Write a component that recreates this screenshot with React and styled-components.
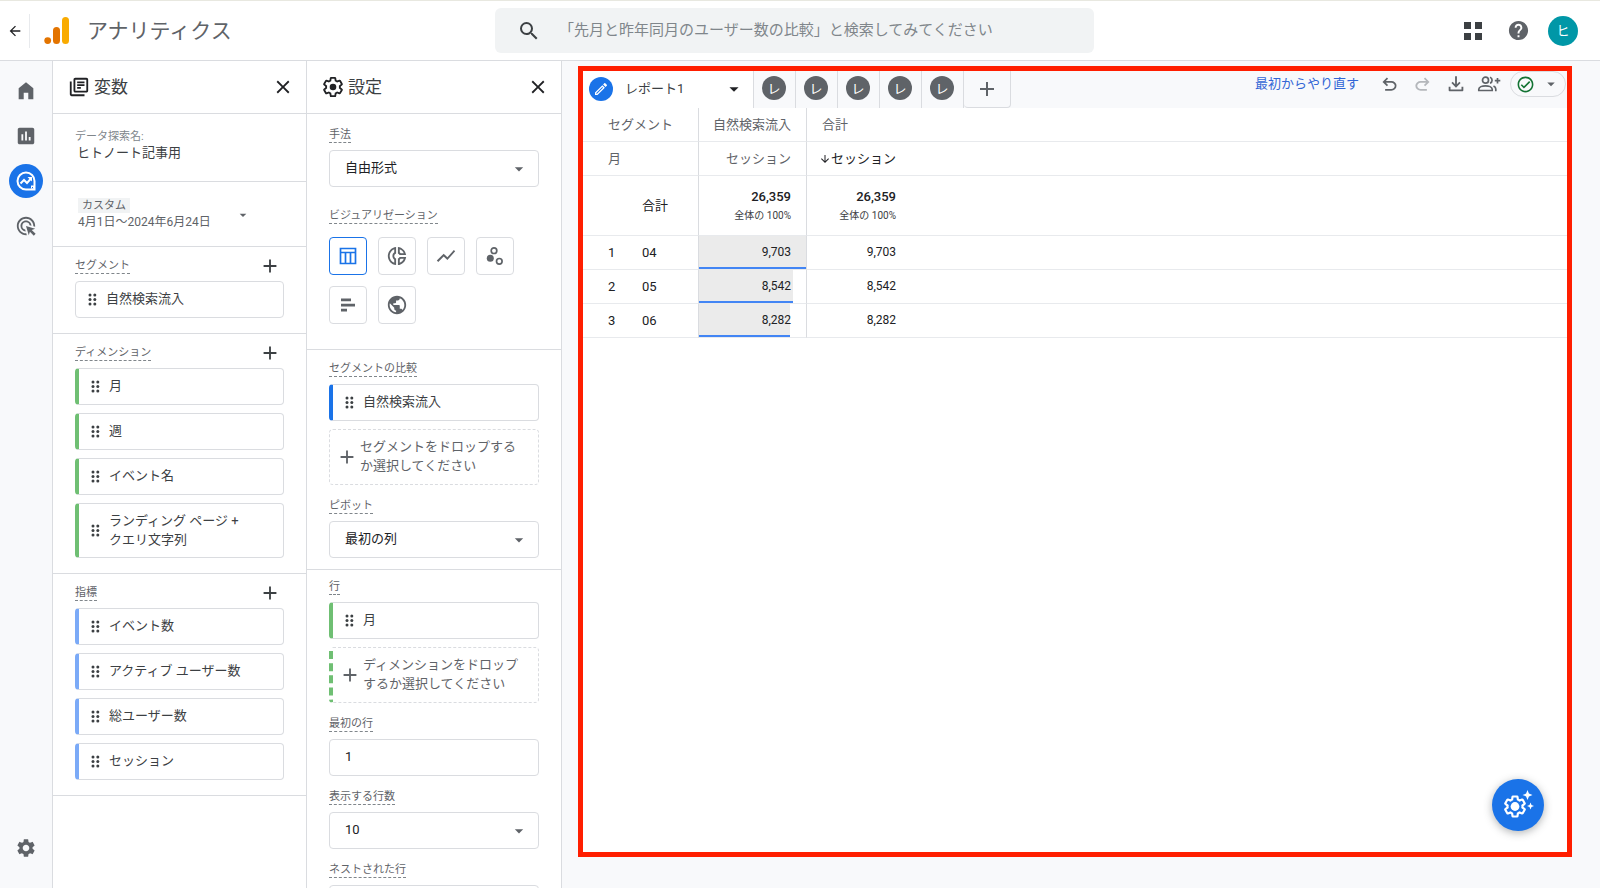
import React from "react";
import styled, { createGlobalStyle, css } from "styled-components";
import {
  MdAdd,
  MdAdsClick,
  MdArrowBack,
  MdArrowDownward,
  MdArrowDropDown,
  MdClose,
  MdHelp,
  MdInsertChart,
  MdOutlineCheckCircle,
  MdOutlineDonutSmall,
  MdOutlineEdit,
  MdOutlineLibraryBooks,
  MdPublic,
  MdSearch,
  MdSettings,
  MdShowChart,
} from "react-icons/md";

const color = {
  line: "#dadce0",
  softLine: "#e8eaed",
  surface: "#f8f9fb",
  ink: "#202124",
  text: "#3c4043",
  muted: "#5f6368",
  faint: "#80868b",
  blue: "#1a73e8",
  lightBlue: "#7baaf7",
  green: "#6fbf73",
  frame: "#ff1e00",
};

const GlobalStyle = createGlobalStyle`
  *, *::before, *::after { box-sizing: border-box; }
  body {
    margin: 0;
    background: #fff;
    color: ${color.text};
    font-family: Roboto, "Noto Sans CJK JP", sans-serif;
    font-size: 13px;
    line-height: 19px;
  }
  button, input, select {
    font: inherit;
    color: inherit;
    margin: 0;
  }
  svg { display: block; flex: none; }
`;

const PlainButton = styled.button.attrs({ type: "button" })`
  display: flex;
  align-items: center;
  justify-content: center;
  padding: 0;
  border: 0;
  background: none;
  cursor: pointer;
`;

/* ---------- drawings ---------- */

const GEAR =
  "M19.43 12.98c.04-.32.07-.64.07-.98 0-.34-.03-.66-.07-.98l2.11-1.65c.19-.15.24-.42.12-.64l-2-3.46a.5.5 0 0 0-.61-.22l-2.49 1c-.52-.4-1.08-.73-1.69-.98l-.38-2.65A.488.488 0 0 0 14 2h-4c-.25 0-.46.18-.49.42l-.38 2.65c-.61.25-1.17.59-1.69.98l-2.49-1a.566.566 0 0 0-.18-.03c-.17 0-.34.09-.43.25l-2 3.46c-.13.22-.07.49.12.64l2.11 1.65c-.04.32-.07.65-.07.98 0 .33.03.66.07.98l-2.11 1.65c-.19.15-.24.42-.12.64l2 3.46a.5.5 0 0 0 .61.22l2.49-1c.52.4 1.08.73 1.69.98l.38 2.65c.03.24.24.42.49.42h4c.25 0 .46-.18.49-.42l.38-2.65c.61-.25 1.17-.59 1.69-.98l2.49 1c.06.02.12.03.18.03.17 0 .34-.09.43-.25l2-3.46c.12-.22.07-.49-.12-.64l-2.11-1.65z";

const GearIcon = () => (
  <svg width="22" height="22" viewBox="0 0 24 24" fill="none" stroke="currentColor" strokeWidth="2">
    <path d={GEAR} />
    <circle cx="12" cy="12" r="3.6" fill="currentColor" stroke="none" />
  </svg>
);

const GearSparkIcon = () => (
  <svg width="31" height="30" viewBox="0 0 31 30" fill="currentColor">
    <g transform="translate(0 4.5)">
      <path d={GEAR} fill="none" stroke="currentColor" strokeWidth="2.2" />
      <circle cx="12" cy="12" r="4.4" />
    </g>
    <path d="M24.5 0l1.4 3.6 3.6 1.4-3.6 1.4-1.4 3.6-1.4-3.6-3.6-1.4 3.6-1.4z" />
    <path d="M27.5 12.5l1 2.5 2.5 1-2.5 1-1 2.5-1-2.5-2.5-1 2.5-1z" />
  </svg>
);

const Logo = () => (
  <svg width="25" height="28" viewBox="0 0 25 28" aria-hidden="true">
    <rect x="18" y="0" width="7" height="27" rx="3.5" fill="#f9ab00" />
    <rect x="9" y="10" width="7" height="17" rx="3.5" fill="#e37400" />
    <circle cx="3.7" cy="23.6" r="3.4" fill="#e37400" />
  </svg>
);

const HomeIcon = () => (
  <svg width="22" height="22" viewBox="0 0 24 24" fill="currentColor">
    <path d="M4 21V9l8-6.5L20 9v12h-5.500v-7h-5v7z" />
  </svg>
);

const ExploreIcon = () => (
  <svg width="20" height="20" viewBox="0 0 20 20" fill="none" stroke="currentColor" strokeWidth="2">
    <path d="M18.500 10A8.500 8.500 0 1 0 10 18.500h8.500z" />
    <path d="M4.500 12.500l3.500-3.500 3 3 4-4.500" />
    <path d="M11.500 6H16v4.500z" fill="currentColor" stroke="none" />
    <path d="M15 14.500h3v3h-3z" fill="currentColor" stroke="none" />
    <path d="M16 16h1v1h-1z" fill={color.blue} stroke="none" />
  </svg>
);

const GripIcon = () => (
  <svg width="9" height="13" viewBox="0 0 9 13" fill={color.text}>
    {[2, 6.5, 11].map((y) => (
      <React.Fragment key={y}>
        <circle cx="2" cy={y} r="1.5" />
        <circle cx="6.8" cy={y} r="1.5" />
      </React.Fragment>
    ))}
  </svg>
);

const AppsIcon = () => (
  <svg width="18" height="18" viewBox="0 0 18 18" fill={color.text}>
    <path d="M0 0h7v7H0zM11 0h7v7h-7zM0 11h7v7H0zM11 11h7v7h-7z" />
  </svg>
);

const TableIcon = () => (
  <svg width="18" height="18" viewBox="0 0 18 18" fill="none" stroke="currentColor" strokeWidth="1.7">
    <path d="M1.500 1.500h15v15h-15zM1.500 5.500h15M6.500 5.500v11M11.500 5.500v11" />
  </svg>
);

const ScatterIcon = () => (
  <svg width="18" height="18" viewBox="0 0 18 18" fill="none" stroke="currentColor" strokeWidth="1.7">
    <circle cx="8" cy="3.7" r="2.8" />
    <circle cx="13.3" cy="14.3" r="2.8" />
    <circle cx="4.3" cy="11.3" r="3.5" fill="currentColor" stroke="none" />
  </svg>
);

const BarsIcon = () => (
  <svg width="16" height="16" viewBox="0 0 16 16" fill="currentColor">
    <path d="M1 1.500h10v2.700H1zM1 6.700h14v2.700H1zM1 11.800h6v2.700H1z" />
  </svg>
);

const UndoIcon = () => (
  <svg width="21" height="21" viewBox="0 -960 960 960" fill="currentColor">
    <path d="M280-200v-80h284q63 0 109.500-40T720-420q0-60-46.500-100T564-560H312l104 104-56 56-200-200 200-200 56 56-104 104h252q97 0 169.500 63T800-420q0 94-72.500 157T564-200H280Z" />
  </svg>
);

const RedoIcon = () => (
  <svg width="21" height="21" viewBox="0 -960 960 960" fill="currentColor">
    <path d="M396-200q-97 0-169.500-63T154-420q0-94 72.500-157T396-640h252L544-744l56-56 200 200-200 200-56-56 104-104H396q-63 0-109.500 40T240-420q0 60 46.500 100T396-280h284v80H396Z" />
  </svg>
);

const DownloadIcon = () => (
  <svg width="22" height="22" viewBox="0 -960 960 960" fill="currentColor">
    <path d="M480-320 280-520l56-58 104 104v-346h80v346l104-104 56 58-200 200ZM220-160q-33 0-46.500-13.500T160-220v-140h80v120h480v-120h80v140q0 33-13.500 46.500T740-160H220Z" />
  </svg>
);

const ShareIcon = () => (
  <svg width="24" height="18" viewBox="0 0 24 18" fill="none" stroke="currentColor" strokeWidth="1.7">
    <circle cx="8.5" cy="5.2" r="3" />
    <path d="M1.800 15.500v-1.300c0-2 3.300-3.300 6.700-3.300s6.700 1.300 6.700 3.300v1.300zM13 2.200a3.200 3.200 0 0 1 0 6M16.500 10.900c1.500.7 2.300 1.700 2.300 3v2.400M20.500 3v5.500M17.800 5.700h5.500" />
  </svg>
);

/* ---------- shell ---------- */

const Shell = styled.div`
  display: flex;
  flex-direction: column;
  height: 100vh;
  overflow: hidden;
`;

const Header = styled.header`
  flex: none;
  display: grid;
  grid-template-columns: 495px minmax(0, 599px) 1fr;
  align-items: center;
  height: 61px;
  border-top: 1px solid #e8e8e0;
  border-bottom: 1px solid ${color.line};
`;

const Brand = styled.div`
  display: flex;
  align-items: center;
  height: 34px;
`;

const BackButton = styled(PlainButton)`
  width: 30px;
  height: 34px;
  border-right: 1px solid ${color.softLine};
  color: ${color.ink};
`;

const BrandName = styled.h1`
  margin: 0 0 0 18px;
  font-size: 21px;
  line-height: 30px;
  font-weight: 400;
  color: ${color.muted};
`;

const LogoLink = styled.a`
  margin-left: 14px;
`;

const SearchBox = styled.label`
  display: flex;
  align-items: center;
  gap: 18px;
  height: 45px;
  padding: 0 22px;
  border-radius: 6px;
  background: #f1f3f4;
  color: ${color.text};
`;

const SearchInput = styled.input`
  flex: 1;
  min-width: 0;
  padding: 0;
  border: 0;
  outline: 0;
  background: none;
  font-size: 15px;
  &::placeholder { color: ${color.faint}; opacity: 1; }
`;

const HeaderActions = styled.div`
  display: flex;
  align-items: center;
  justify-content: flex-end;
  gap: 15px;
  padding-right: 22px;
  color: ${color.muted};
`;

const HeaderButton = styled(PlainButton)`
  width: 30px;
  height: 30px;
`;

const Avatar = styled(HeaderButton)`
  border-radius: 50%;
  background: #0097a7;
  color: #fff;
`;

const Body = styled.div`
  flex: 1;
  min-height: 0;
  display: flex;
`;

const Rail = styled.nav`
  flex: none;
  display: flex;
  flex-direction: column;
  align-items: center;
  gap: 11px;
  width: 53px;
  padding: 13px 0 23px;
  border-right: 1px solid ${color.line};
  background: ${color.surface};
  color: ${color.muted};
`;

const RailButton = styled(PlainButton)`
  width: 34px;
  height: 34px;
  border-radius: 50%;
  ${(p) => p.$active && css`background: ${color.blue}; color: #fff;`}
  ${(p) => p.$last && css`margin-top: auto;`}
`;

/* ---------- side panels ---------- */

const Panel = styled.section`
  flex: none;
  width: ${(p) => p.$width}px;
  border-right: 1px solid ${color.line};
  overflow-y: auto;
  scrollbar-width: none;
`;

const PanelHead = styled.header`
  display: flex;
  align-items: center;
  gap: 4px;
  height: 53px;
  padding: 0 12px 0 15px;
  border-bottom: 1px solid ${color.line};
  color: ${color.ink};
`;

const PanelTitle = styled.h2`
  flex: 1;
  margin: 0;
  font-size: 17px;
  line-height: 24px;
  font-weight: 400;
  color: ${color.text};
`;

const Section = styled.div`
  padding: ${(p) => p.$pad || "10px 22px 15px"};
  border-bottom: 1px solid ${color.line};
`;

const Field = styled.div`
  display: flex;
  flex-direction: column;
  gap: 7px;
  & + & { margin-top: 12px; }
`;

const VizField = styled.div`
  display: flex;
  flex-direction: column;
  gap: 13px;
  margin-top: 20px;
`;

const LabelRow = styled.div`
  display: flex;
  align-items: center;
  justify-content: space-between;
  height: 17px;
`;

const FieldLabel = styled.label`
  align-self: flex-start;
  height: 17px;
  border-bottom: 1px dashed ${color.faint};
  font-size: 11px;
  line-height: 18px;
  color: ${color.muted};
`;

const AddButton = styled(PlainButton)`
  width: 22px;
  height: 22px;
  margin-right: 3px;
  color: ${color.text};
`;

const ChipList = styled.div`
  display: flex;
  flex-direction: column;
  gap: 8px;
`;

const ItemText = styled.span`
  padding-bottom: 2px;
`;

const Chip = styled.div`
  display: flex;
  align-items: center;
  gap: 9px;
  min-height: ${(p) => (p.$tall ? 55 : 37)}px;
  padding: 0 12px;
  border: 1px solid ${color.line};
  border-radius: 4px;
  ${(p) => p.$accent && css`border-left: 4px solid ${p.$accent};`}
`;

const DropZone = styled(PlainButton)`
  justify-content: flex-start;
  gap: 2px;
  min-height: 56px;
  padding: 0 12px 0 6px;
  border: 1px dashed ${color.line};
  border-radius: 4px;
  text-align: left;
  color: ${color.muted};
  ${(p) => p.$accent && css`border-left: 4px dashed ${p.$accent};`}
`;

const NameLabel = styled.label`
  display: block;
  font-size: 11px;
  line-height: 14px;
  color: ${color.faint};
`;

const NameInput = styled.input`
  display: block;
  width: 100%;
  height: 16px;
  padding: 0 0 0 2px;
  border: 0;
  outline: 0;
  background: none;
`;

const DateButton = styled(PlainButton)`
  width: 100%;
  justify-content: space-between;
  padding: 0 33px 0 3px;
  text-align: left;
  color: ${color.muted};
`;

const DateText = styled.span`
  display: flex;
  flex-direction: column;
  align-items: flex-start;
  font-size: 12px;
  line-height: 18px;
`;

const DateTag = styled.span`
  padding: 0 4px;
  background: #f1f3f4;
  font-size: 11px;
  line-height: 15px;
`;

const SelectFrame = styled.div`
  display: grid;
  align-items: center;
  & > * { grid-area: 1 / 1; }
  & > svg { justify-self: end; margin-right: 10px; pointer-events: none; color: ${color.muted}; }
`;

const control = css`
  width: 100%;
  height: 37px;
  padding: 0 15px 2px;
  border: 1px solid ${color.line};
  border-radius: 4px;
  background: #fff;
  color: ${color.ink};
`;

const Select = styled.select`
  ${control}
  appearance: none;
`;

const TextInput = styled.input`
  ${control}
`;

const VizGrid = styled.div`
  display: flex;
  flex-wrap: wrap;
  gap: 11px;
`;

const VizButton = styled(PlainButton)`
  width: 38px;
  height: 38px;
  border: 1px solid ${(p) => (p.$active ? color.blue : color.line)};
  border-radius: 4px;
  color: ${(p) => (p.$active ? color.blue : color.muted)};
`;

/* ---------- report ---------- */

const Main = styled.main`
  flex: 1;
  min-width: 0;
  display: flex;
  padding: 5px 28px 31px 16px;
  background: ${color.surface};
`;

const Report = styled.div`
  position: relative;
  flex: 1;
  min-width: 0;
  display: flex;
  flex-direction: column;
  border: 5px solid ${color.frame};
  background: #fff;
`;

const TabBar = styled.div`
  display: flex;
  height: 37px;
  background: ${color.surface};
`;

const ActiveTab = styled.div`
  display: flex;
  align-items: center;
  gap: 12px;
  width: 171px;
  padding: 0 8px 2px 6px;
  border-right: 1px solid ${color.line};
  background: #fff;
  & > button:last-child { margin-left: auto; color: ${color.ink}; }
`;

const TabBadge = styled.span`
  display: grid;
  place-items: center;
  width: 24px;
  height: 24px;
  border-radius: 50%;
  background: ${(p) => (p.$active ? color.blue : color.muted)};
  color: #fff;
`;

const Tab = styled(PlainButton)`
  width: 42px;
  padding: 0 1px 3px 0;
  border-right: 1px solid ${color.line};
`;

const NewTab = styled(PlainButton)`
  width: 47px;
  border: solid ${color.line};
  border-width: 0 1px 1px 0;
  border-radius: 0 0 4px 4px;
  color: ${color.muted};
`;

const Tools = styled.div`
  display: flex;
  align-items: center;
  height: 26px;
  margin-left: auto;
  padding-right: 1px;
  color: ${color.muted};
`;

const ResetButton = styled(PlainButton)`
  margin-right: 14px;
  padding-bottom: 2px;
  color: #3367d6;
`;

const ToolButton = styled(PlainButton)`
  width: 33px;
  height: 26px;
  color: ${(p) => (p.disabled ? "#b4b7bb" : color.muted)};
`;

const StatusPill = styled(PlainButton)`
  gap: 7px;
  width: 56px;
  height: 26px;
  margin-left: 5px;
  border: 1px solid ${color.line};
  border-radius: 13px;
  color: ${color.muted};
  & > svg:first-child { color: #137333; }
`;

const Grid = styled.table`
  width: 100%;
  table-layout: fixed;
  border-collapse: separate;
  border-spacing: 0;
  color: ${color.ink};

  th, td {
    height: 34px;
    padding: 0;
    border-bottom: 1px solid ${color.softLine};
    text-align: left;
    font-weight: 400;
  }
`;

const HeadCell = styled.th`
  && {
    padding: 0 15px 0 ${(p) => p.$indent || 0}px;
    color: ${(p) => (p.$strong ? color.ink : color.muted)};
    text-align: ${(p) => p.$align || "left"};
    border-right: ${(p) => (p.$rule ? `1px solid ${color.line}` : "0")};
  }
`;

const IndexCell = styled.td`
  && { padding-left: 25px; }
`;

const NameCell = styled.th`
  && { border-right: 1px solid ${color.line}; height: ${(p) => (p.$tall ? 60 : 34)}px; }
`;

const ValueCell = styled.td`
  && {
    padding-right: ${(p) => (p.$flush ? 0 : 15)}px;
    border-right: ${(p) => (p.$rule ? `1px solid ${color.line}` : "0")};
    text-align: right;
    font-size: 12px;
  }
`;

const TotalValue = styled.strong`
  display: block;
  font-size: 13px;
  font-weight: 500;
`;

const TotalShare = styled.span`
  display: block;
  font-size: 10px;
  color: ${color.text};
`;

const Meter = styled.div`
  display: grid;
  align-items: center;
  height: 33px;
  & > * { grid-area: 1 / 1; }
`;

const MeterBar = styled.div`
  height: 100%;
  border-bottom: 2px solid #4285f4;
  background: #ebebeb;
`;

const MeterValue = styled.span`
  padding-right: 15px;
`;

const SortLabel = styled(PlainButton)`
  margin-left: auto;
`;

const Fab = styled(PlainButton)`
  position: absolute;
  right: 23px;
  bottom: 21px;
  width: 52px;
  height: 52px;
  border-radius: 50%;
  background: ${color.blue};
  color: #fff;
  box-shadow: 0 2px 8px rgba(60, 64, 67, 0.4);
`;

/* ---------- pieces ---------- */

const Item = ({ children, accent, tall }) => (
  <Chip $accent={accent} $tall={tall}>
    <GripIcon />
    <ItemText>{children}</ItemText>
  </Chip>
);

const Drop = ({ children, accent }) => (
  <DropZone $accent={accent}>
    <MdAdd size={22} />
    <ItemText>{children}</ItemText>
  </DropZone>
);

const VariableGroup = ({ title, children }) => (
  <Section>
    <Field>
      <LabelRow>
        <FieldLabel as="span">{title}</FieldLabel>
        <AddButton aria-label={`${title}を追加`}>
          <MdAdd size={22} />
        </AddButton>
      </LabelRow>
      <ChipList>{children}</ChipList>
    </Field>
  </Section>
);

const SelectField = ({ id, label, value }) => (
  <Field>
    <FieldLabel htmlFor={id}>{label}</FieldLabel>
    <SelectFrame>
      <Select id={id} defaultValue={value}>
        <option>{value}</option>
      </Select>
      <MdArrowDropDown size={20} />
    </SelectFrame>
  </Field>
);

const PanelHeader = ({ icon, title }) => (
  <PanelHead>
    {icon}
    <PanelTitle>{title}</PanelTitle>
    <PlainButton aria-label={`${title}を閉じる`}>
      <MdClose size={22} />
    </PlainButton>
  </PanelHead>
);

const visualizations = [
  { name: "表", icon: <TableIcon />, active: true },
  { name: "ドーナツ グラフ", icon: <MdOutlineDonutSmall size={22} /> },
  { name: "折れ線グラフ", icon: <MdShowChart size={22} /> },
  { name: "散布図", icon: <ScatterIcon /> },
  { name: "棒グラフ", icon: <BarsIcon /> },
  { name: "地図", icon: <MdPublic size={22} /> },
];

const rows = [
  { month: "04", sessions: 9703 },
  { month: "05", sessions: 8542 },
  { month: "06", sessions: 8282 },
];
const maxSessions = Math.max(...rows.map((row) => row.sessions));

const Variables = () => (
  <Panel $width={254}>
    <PanelHeader icon={<MdOutlineLibraryBooks size={22} />} title="変数" />
    <Section $pad="16px 22px 21px">
      <NameLabel htmlFor="exploration-name">データ探索名:</NameLabel>
      <NameInput id="exploration-name" defaultValue="ヒトノート記事用" />
    </Section>
    <Section $pad="16px 22px 15px">
      <DateButton>
        <DateText>
          <DateTag>カスタム</DateTag>
          4月1日〜2024年6月24日
        </DateText>
        <MdArrowDropDown size={16} />
      </DateButton>
    </Section>
    <VariableGroup title="セグメント">
      <Item>自然検索流入</Item>
    </VariableGroup>
    <VariableGroup title="ディメンション">
      <Item accent={color.green}>月</Item>
      <Item accent={color.green}>週</Item>
      <Item accent={color.green}>イベント名</Item>
      <Item accent={color.green} tall>
        ランディング ページ +<br />
        クエリ文字列
      </Item>
    </VariableGroup>
    <VariableGroup title="指標">
      <Item accent={color.lightBlue}>イベント数</Item>
      <Item accent={color.lightBlue}>アクティブ ユーザー数</Item>
      <Item accent={color.lightBlue}>総ユーザー数</Item>
      <Item accent={color.lightBlue}>セッション</Item>
    </VariableGroup>
  </Panel>
);

const Settings = () => (
  <Panel $width={255}>
    <PanelHeader icon={<GearIcon />} title="設定" />
    <Section $pad="12px 22px 25px">
      <SelectField id="technique" label="手法" value="自由形式" />
      <VizField>
        <FieldLabel as="span">ビジュアリゼーション</FieldLabel>
        <VizGrid>
          {visualizations.map((v) => (
            <VizButton key={v.name} $active={v.active} aria-label={v.name}>
              {v.icon}
            </VizButton>
          ))}
        </VizGrid>
      </VizField>
    </Section>
    <Section $pad="10px 22px 11px">
      <Field>
        <FieldLabel as="span">セグメントの比較</FieldLabel>
        <ChipList>
          <Item accent={color.blue}>自然検索流入</Item>
          <Drop>セグメントをドロップするか選択してください</Drop>
        </ChipList>
      </Field>
      <SelectField id="pivot" label="ピボット" value="最初の列" />
    </Section>
    <Section $pad="8px 22px 15px">
      <Field>
        <FieldLabel as="span">行</FieldLabel>
        <ChipList>
          <Item accent={color.green}>月</Item>
          <Drop accent={color.green}>ディメンションをドロップするか選択してください</Drop>
        </ChipList>
      </Field>
      <Field>
        <FieldLabel htmlFor="first-row">最初の行</FieldLabel>
        <TextInput id="first-row" defaultValue="1" />
      </Field>
      <SelectField id="row-count" label="表示する行数" value="10" />
      <SelectField id="nested-rows" label="ネストされた行" value="いいえ" />
    </Section>
  </Panel>
);

const ReportTable = () => (
  <Grid>
    <colgroup>
      <col width="59" />
      <col width="57" />
      <col width="108" />
      <col width="104" />
      <col />
    </colgroup>
    <thead>
      <tr>
        <HeadCell colSpan={2} $indent={25} $rule>セグメント</HeadCell>
        <HeadCell $align="right" $rule>自然検索流入</HeadCell>
        <HeadCell $indent={15}>合計</HeadCell>
        <td />
      </tr>
      <tr>
        <HeadCell colSpan={2} $indent={25} $rule>月</HeadCell>
        <HeadCell $align="right" $rule>セッション</HeadCell>
        <HeadCell $strong>
          <SortLabel>
            <MdArrowDownward size={12} />
            セッション
          </SortLabel>
        </HeadCell>
        <td />
      </tr>
    </thead>
    <tbody>
      <tr>
        <td />
        <NameCell scope="row" $tall>合計</NameCell>
        <ValueCell $rule>
          <TotalValue>26,359</TotalValue>
          <TotalShare>全体の 100%</TotalShare>
        </ValueCell>
        <ValueCell>
          <TotalValue>26,359</TotalValue>
          <TotalShare>全体の 100%</TotalShare>
        </ValueCell>
        <td />
      </tr>
      {rows.map((row, i) => (
        <tr key={row.month}>
          <IndexCell>{i + 1}</IndexCell>
          <NameCell scope="row">{row.month}</NameCell>
          <ValueCell $flush $rule>
            <Meter>
              <MeterBar style={{ width: `${(row.sessions / maxSessions) * 100}%` }} />
              <MeterValue>{row.sessions.toLocaleString("en-US")}</MeterValue>
            </Meter>
          </ValueCell>
          <ValueCell>{row.sessions.toLocaleString("en-US")}</ValueCell>
          <td />
        </tr>
      ))}
    </tbody>
  </Grid>
);

export default function App() {
  return (
    <Shell>
      <GlobalStyle />
      <Header>
        <Brand>
          <BackButton aria-label="戻る">
            <MdArrowBack size={16} />
          </BackButton>
          <LogoLink href="#home" aria-label="ホーム">
            <Logo />
          </LogoLink>
          <BrandName>アナリティクス</BrandName>
        </Brand>
        <SearchBox>
          <MdSearch size={24} />
          <SearchInput
            type="text"
            aria-label="検索"
            placeholder="「先月と昨年同月のユーザー数の比較」と検索してみてください"
          />
        </SearchBox>
        <HeaderActions>
          <HeaderButton aria-label="アプリ">
            <AppsIcon />
          </HeaderButton>
          <HeaderButton aria-label="ヘルプ">
            <MdHelp size={23} />
          </HeaderButton>
          <Avatar>ヒ</Avatar>
        </HeaderActions>
      </Header>
      <Body>
        <Rail>
          <RailButton aria-label="ホーム"><HomeIcon /></RailButton>
          <RailButton aria-label="レポート"><MdInsertChart size={22} /></RailButton>
          <RailButton aria-label="探索" $active><ExploreIcon /></RailButton>
          <RailButton aria-label="広告"><MdAdsClick size={22} /></RailButton>
          <RailButton aria-label="管理" $last><MdSettings size={22} /></RailButton>
        </Rail>
        <Variables />
        <Settings />
        <Main>
          <Report>
            <TabBar>
              <ActiveTab>
                <TabBadge $active><MdOutlineEdit size={16} /></TabBadge>
                <span>レポート1</span>
                <PlainButton aria-label="タブのメニュー">
                  <MdArrowDropDown size={22} />
                </PlainButton>
              </ActiveTab>
              {[2, 3, 4, 5, 6].map((n) => (
                <Tab key={n} aria-label={`レポート${n}`}>
                  <TabBadge>レ</TabBadge>
                </Tab>
              ))}
              <NewTab aria-label="新しいタブ"><MdAdd size={24} /></NewTab>
              <Tools>
                <ResetButton>最初からやり直す</ResetButton>
                <ToolButton aria-label="元に戻す"><UndoIcon /></ToolButton>
                <ToolButton aria-label="やり直す" disabled><RedoIcon /></ToolButton>
                <ToolButton aria-label="ダウンロード"><DownloadIcon /></ToolButton>
                <ToolButton aria-label="共有"><ShareIcon /></ToolButton>
                <StatusPill aria-label="データの状態">
                  <MdOutlineCheckCircle size={19} />
                  <MdArrowDropDown size={18} />
                </StatusPill>
              </Tools>
            </TabBar>
            <ReportTable />
            <Fab aria-label="クイック設定"><GearSparkIcon /></Fab>
          </Report>
        </Main>
      </Body>
    </Shell>
  );
}
